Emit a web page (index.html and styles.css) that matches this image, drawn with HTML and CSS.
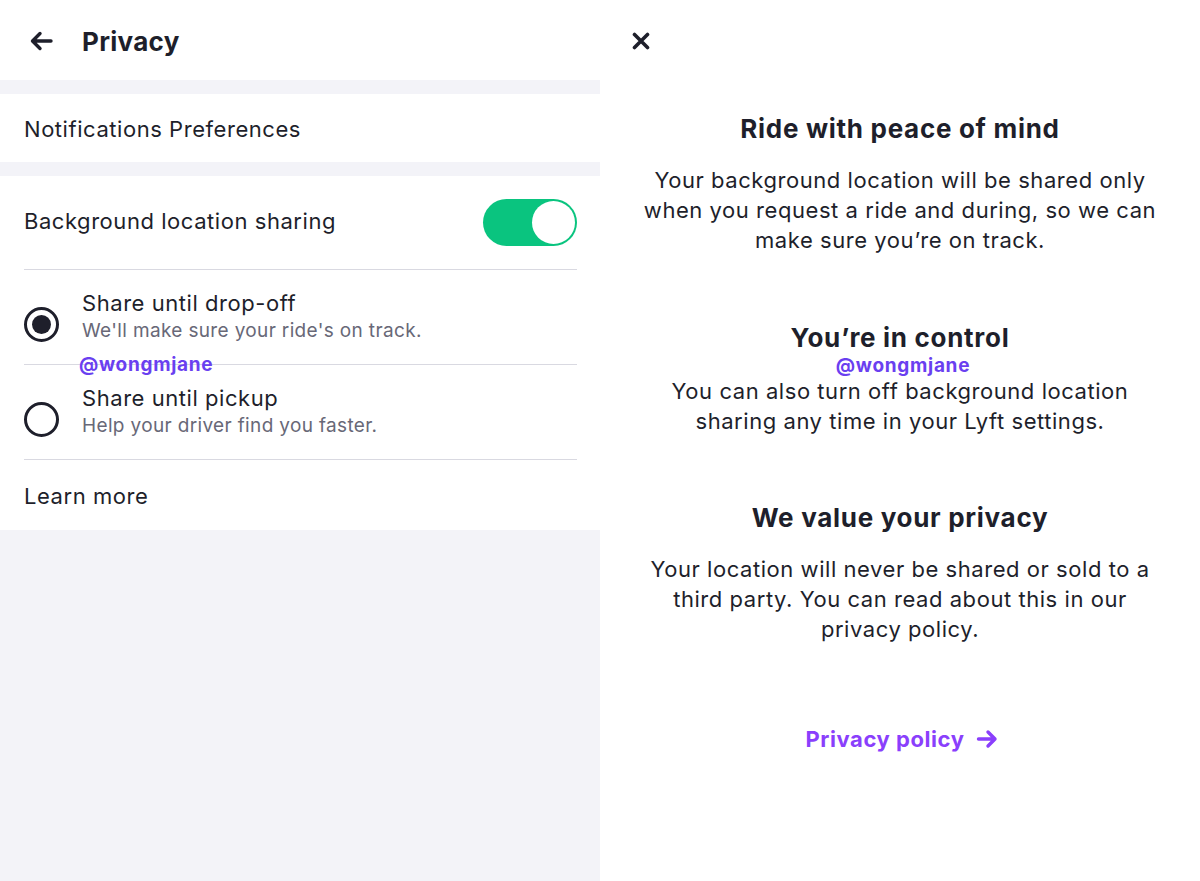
FILE: index.html
```html
<!DOCTYPE html>
<html>
<head>
<meta charset="utf-8">
<link rel="stylesheet" href="styles.css">
</head>
<body>
<div class="app">
  <div class="left">
    <div class="header">
      <svg class="back" width="24" height="20" viewBox="0 0 24 20"><path d="M22 10H4M11 2.5L3.5 10L11 17.5" fill="none" stroke="#1e1f2b" stroke-width="3.4" stroke-linecap="round" stroke-linejoin="round"/></svg>
      <span class="title">Privacy</span>
    </div>
    <div class="card notif">Notifications Preferences</div>
    <div class="card settings">
      <div class="row toggle-row">
        <span>Background location sharing</span>
        <span class="toggle"><span class="knob"></span></span>
      </div>
      <div class="divider"></div>
      <div class="row radio-row">
        <span class="radio on"><span class="dot"></span></span>
        <div class="texts">
          <div class="rt">Share until drop-off</div>
          <div class="rs">We'll make sure your ride's on track.</div>
        </div>
      </div>
      <div class="divider wm-wrap"><span class="wm wm-left">@wongmjane</span></div>
      <div class="row radio-row">
        <span class="radio"></span>
        <div class="texts">
          <div class="rt">Share until pickup</div>
          <div class="rs">Help your driver find you faster.</div>
        </div>
      </div>
      <div class="divider"></div>
      <div class="row learn">Learn more</div>
    </div>
  </div>
  <div class="right">
    <svg class="close" width="18" height="18" viewBox="0 0 18 18"><path d="M2.5 2.5L15.5 15.5M15.5 2.5L2.5 15.5" stroke="#1e1f2b" stroke-width="3.6" stroke-linecap="round"/></svg>
    <div class="info">
      <div class="block b1">
        <h2>Ride with peace of mind</h2>
        <p>Your background location will be shared only when you request a ride and during, so we can make sure you’re on track.</p>
      </div>
      <div class="block b2">
        <h2>You’re in control</h2>
        <div class="wm wm-center">@wongmjane</div>
        <p class="tight">You can also turn off background location sharing any time in your Lyft settings.</p>
      </div>
      <div class="block b3">
        <h2>We value your privacy</h2>
        <p>Your location will never be shared or sold to a third party. You can read about this in our privacy policy.</p>
      </div>
      <div class="policy">Privacy policy
        <svg width="22" height="20" viewBox="0 0 22 20"><path d="M2.5 10H19M12 3L19 10L12 17" fill="none" stroke="#8a3ffc" stroke-width="3.4" stroke-linecap="round" stroke-linejoin="round"/></svg>
      </div>
    </div>
  </div>
</div>
</body>
</html>
```

FILE: styles.css
```css
* { box-sizing: border-box; }
html, body { margin: 0; padding: 0; }
body {
  font-family: Inter, "Liberation Sans", sans-serif;
  color: #1e1f2b;
  background: #fff;
  letter-spacing: 0.55px;
}
.app { display: flex; width: 1200px; height: 881px; }
.left {
  width: 600px;
  background: #f3f3f8;
  display: flex;
  flex-direction: column;
  gap: 14px;
}
.header {
  height: 80px;
  background: #fff;
  display: flex;
  align-items: center;
  padding-left: 29px;
  gap: 29px;
}
.back { margin-top: 2px; }
.title { font-size: 26px; font-weight: 700; letter-spacing: 0.3px; margin-top: 2px; }
.card { background: #fff; padding: 0 23px 0 24px; }
.notif {
  height: 68px;
  display: flex;
  align-items: center;
  font-size: 22px;
  padding-top: 2px;
}
.row { display: flex; align-items: center; font-size: 22px; }
.toggle-row { height: 93px; justify-content: space-between; }
.toggle-row > span:first-child { margin-top: -4px; }
.toggle {
  width: 94px;
  height: 47px;
  border-radius: 24px;
  background: #0ac47f;
  position: relative;
  display: block;
}
.knob {
  position: absolute;
  right: 2px;
  top: 2px;
  width: 43px;
  height: 43px;
  border-radius: 50%;
  background: #fff;
}
.divider { height: 1px; background: #d9d9e1; }
.wm-wrap { position: relative; }
.radio-row { height: 94px; gap: 24px; }
.radio {
  width: 35px;
  height: 35px;
  border-radius: 50%;
  border: 3px solid #1e1f2b;
  display: flex;
  align-items: center;
  justify-content: center;
  flex: none;
  margin-top: 14px;
}
.radio-row:last-of-type .radio { margin-top: 12px; }
.dot { width: 19px; height: 19px; border-radius: 50%; background: #1e1f2b; }
.texts { display: flex; flex-direction: column; margin-left: -1px; }
.rt { font-size: 22px; line-height: 28px; }
.rs { font-size: 19px; line-height: 28px; color: #686877; letter-spacing: 0.35px; }
.learn { height: 70px; padding-top: 2px; }
.wm { color: #6a3ff0; font-weight: 700; font-size: 19px; letter-spacing: 0.7px; }
.wm-left { position: absolute; left: 55px; top: -11px; line-height: 24px; }
.right { flex: 1; background: #fff; position: relative; }
.close { position: absolute; left: 32px; top: 32px; }
.info {
  padding: 113px 40px 0;
  display: flex;
  flex-direction: column;
  align-items: center;
  text-align: center;
}
.block h2 { margin: 0; font-size: 26px; font-weight: 700; line-height: 32px; letter-spacing: 0.7px; }
.block p { margin: 20px 0 0; font-size: 22px; line-height: 30px; }
.block p.tight { margin-top: -1px; }
.b2 { margin-top: 67px; }
.b2 .wm { line-height: 22px; margin-top: 1px; padding-left: 6px; }
.b3 { margin-top: 66px; }
.policy {
  margin-top: 82px;
  color: #8a3ffc;
  font-weight: 700;
  font-size: 22px;
  display: flex;
  align-items: center;
  gap: 12px;
  padding-left: 4px;
}
```
